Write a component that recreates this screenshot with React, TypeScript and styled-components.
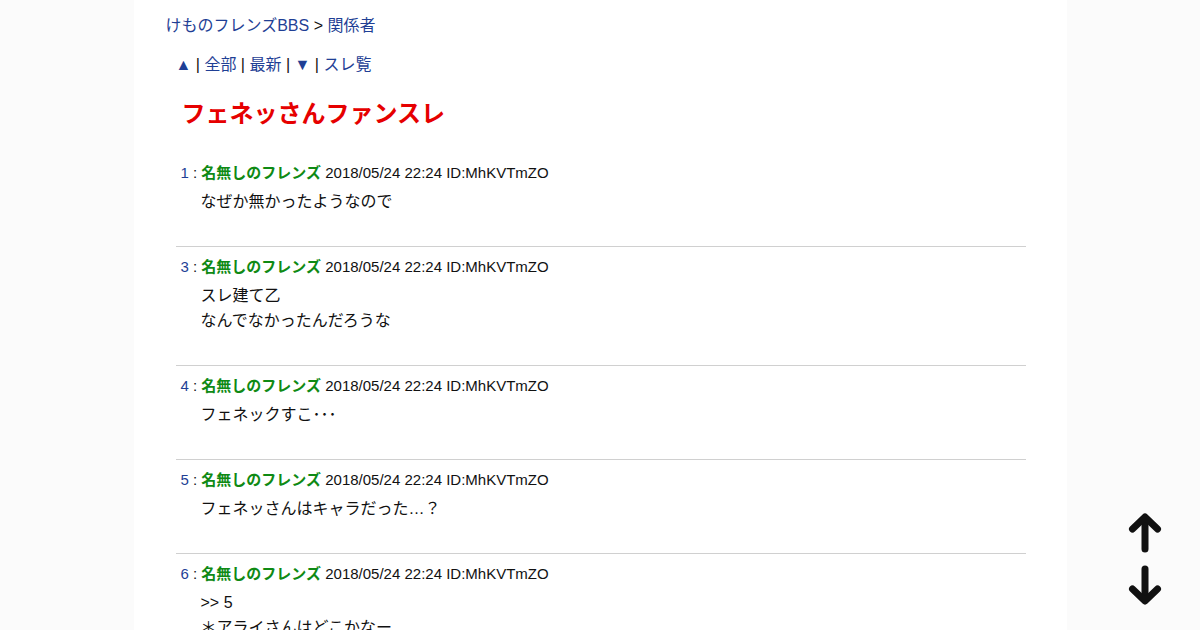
import React from "react";
import styled, { createGlobalStyle } from "styled-components";

const Global = createGlobalStyle`
  html, body { margin: 0; padding: 0; }
  body {
    background: #fbfbfb;
    font-family: "Liberation Sans", Arial, "Noto Sans CJK JP", sans-serif;
    color: #111;
    overflow: hidden;
  }
`;

const Column = styled.div`
  width: 933px;
  margin: 0 auto;
  background: #fff;
  min-height: 630px;
  padding-top: 14px;
  box-sizing: border-box;
`;

const Link = styled.a`
  color: #1f3f95;
  text-decoration: none;
`;

const Breadcrumb = styled.div`
  padding-left: 32px;
  font-size: 16px;
  line-height: 24px;
  color: #111;
`;

const Nav = styled.div`
  margin-top: 15px;
  padding-left: 42px;
  font-size: 16px;
  line-height: 24px;
  color: #111;
`;

const Title = styled.h1`
  margin: 21px 0 0 48px;
  font-size: 24px;
  line-height: 32px;
  font-weight: bold;
  color: #e60000;
`;

const Posts = styled.div`
  margin: 31px 41px 0 42px;
`;

const Post = styled.dl<{ first?: boolean }>`
  margin: 0;
  padding: ${(p) => (p.first ? "0" : "8px")} 0 32px 0;
  border-bottom: 1px solid #d0d0d0;
`;

const Header = styled.dt`
  padding-left: 5px;
  font-size: 15px;
  line-height: 24px;
  color: #111;
`;

const Num = styled.span`
  color: #1f3f95;
`;

const Name = styled.b`
  color: #0f8a14;
  font-weight: bold;
`;

const Body = styled.dd`
  margin: 4px 0 0 25px;
  font-size: 16px;
  line-height: 25px;
  color: #111;
`;

const Arrows = styled.div`
  position: fixed;
  right: 38px;
  bottom: 25px;
  display: flex;
  flex-direction: column;
  gap: 12px;
`;

const ArrowBtn = styled.a`
  display: block;
  width: 34px;
  height: 40px;
`;

const UpArrow = () => (
  <svg width="34" height="40" viewBox="0 0 34 40" fill="none" stroke="#111" strokeWidth="7" strokeLinecap="round" strokeLinejoin="round">
    <path d="M17 36 V5" />
    <path d="M4.5 16 L17 4 L29.5 16" />
  </svg>
);

const DownArrow = () => (
  <svg width="34" height="40" viewBox="0 0 34 40" fill="none" stroke="#111" strokeWidth="7" strokeLinecap="round" strokeLinejoin="round">
    <path d="M17 4 V35" />
    <path d="M4.5 24 L17 36 L29.5 24" />
  </svg>
);

const posts = [
  { n: 1, lines: ["なぜか無かったようなので"] },
  { n: 3, lines: ["スレ建て乙", "なんでなかったんだろうな"] },
  { n: 4, lines: ["フェネックすこ･･･"] },
  { n: 5, lines: ["フェネッさんはキャラだった…？"] },
  { n: 6, lines: [">> 5", "＊アライさんはどこかなー"] },
];

export default function App() {
  return (
    <>
      <Global />
      <Column>
        <Breadcrumb>
          <Link href="#">けものフレンズBBS</Link> &gt; <Link href="#">関係者</Link>
        </Breadcrumb>
        <Nav>
          <Link href="#">▲</Link> | <Link href="#">全部</Link> | <Link href="#">最新</Link> |{" "}
          <Link href="#">▼</Link> | <Link href="#">スレ覧</Link>
        </Nav>
        <Title>フェネッさんファンスレ</Title>
        <Posts>
          {posts.map((p, i) => (
            <Post key={p.n} first={i === 0}>
              <Header>
                <Num>{p.n}</Num> : <Name>名無しのフレンズ</Name> 2018/05/24 22:24 ID:MhKVTmZO
              </Header>
              <Body>
                {p.lines.map((l, j) => (
                  <div key={j}>{l}</div>
                ))}
              </Body>
            </Post>
          ))}
        </Posts>
      </Column>
      <Arrows>
        <ArrowBtn href="#"><UpArrow /></ArrowBtn>
        <ArrowBtn href="#"><DownArrow /></ArrowBtn>
      </Arrows>
    </>
  );
}
